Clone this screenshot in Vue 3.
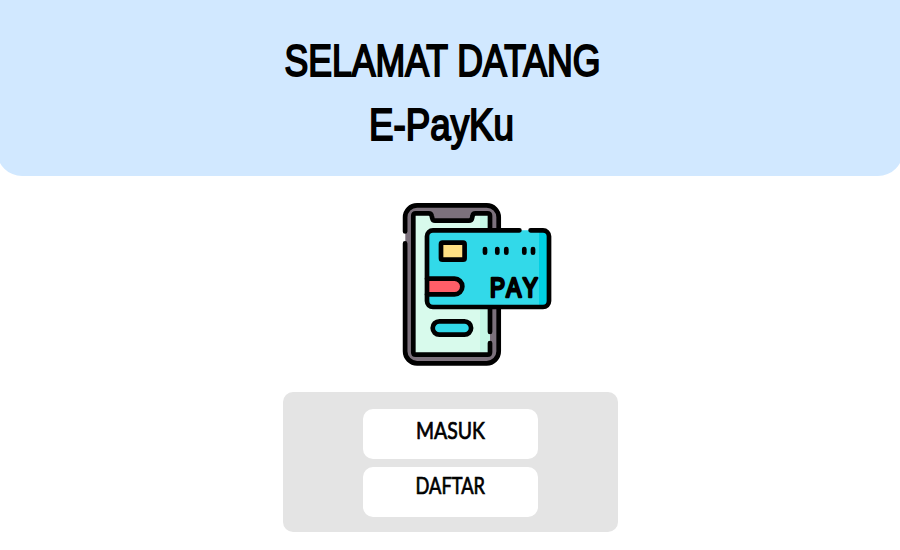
<script setup>
const actions = [
  { label: 'MASUK', left: 53, width: 69, baseline: 30.2 },
  { label: 'DAFTAR', left: 52.5, width: 69.5, baseline: 27.2 },
]
</script>

<template>
  <main class="page">
    <header class="hero">
      <h1 class="title">
        <svg width="900" height="64" viewBox="0 0 900 64">
          <text x="284.5" y="45.9" textLength="316" lengthAdjust="spacingAndGlyphs">SELAMAT DATANG</text>
        </svg>
        <svg width="900" height="64" viewBox="0 0 900 64">
          <text x="369" y="45.9" textLength="145" lengthAdjust="spacingAndGlyphs">E-PayKu</text>
        </svg>
      </h1>
    </header>

    <svg class="art" width="165" height="180" viewBox="395 195 165 180">
      <!-- phone -->
      <rect x="405.3" y="205.3" width="93.4" height="158" rx="12" fill="#7c717c" />
      <path d="M413.3 213.3H431L433.5 220.7H470.5L473 213.3H490V354.7H413.3Z" fill="#d8faec" />
      <path d="M480 213.3H490V354.7H480Z" fill="#c5f7e6" />
      <g class="line">
        <path d="M405.1 231.4V217.3A12 12 0 0 1 417.1 205.3H486.7A12 12 0 0 1 498.7 217.3V351.3A12 12 0 0 1 486.7 363.3H417.1A12 12 0 0 1 405.1 351.3V243.4" />
        <path d="M490 332V215.8Q490 213.3 487.5 213.3H475.5Q473 213.3 472.6 215.8L472 218.4Q471.5 220.7 469 220.7H435Q432.7 220.7 432.3 218.4L431.7 215.8Q431.2 213.3 428.7 213.3H415.8Q413.3 213.3 413.3 215.8V352.2Q413.3 354.7 415.8 354.7H487.5Q490 354.7 490 352.2V343" />
        <rect x="432.7" y="321.3" width="38.4" height="13.4" rx="6.7" fill="#32d9e9" />
      </g>
      <!-- card -->
      <rect x="427" y="230.3" width="122" height="76.7" rx="6" fill="#32d9e9" />
      <path d="M539 230.3H543A6 6 0 0 1 549 236.3V301A6 6 0 0 1 543 307H539Z" fill="#00cfe3" />
      <path d="M427 278.7H454.5A7.85 7.85 0 0 1 454.5 294.4H427Z" fill="#ff5e68" />
      <g class="line">
        <path d="M427 278.7H454.5A7.85 7.85 0 0 1 454.5 294.4H427" />
        <path d="M519.4 230.3H433A6 6 0 0 0 427 236.3V301A6 6 0 0 0 433 307H543A6 6 0 0 0 549 301V236.3A6 6 0 0 0 543 230.3H530.6" />
        <rect x="441" y="242.7" width="23.6" height="17" rx="1.5" fill="#ffe083" />
        <path d="M485 249V252.7M497.3 249V252.7M506.3 249V252.7M524.3 249V252.7M533 249V252.7" />
      </g>
      <text class="pay" x="490" y="296.6" textLength="49" lengthAdjust="spacingAndGlyphs">PAY</text>
    </svg>

    <nav class="panel">
      <button v-for="item in actions" :key="item.label" class="action" type="button">
        <svg width="175" height="50" viewBox="0 0 175 50">
          <text :x="item.left" :y="item.baseline" :textLength="item.width" lengthAdjust="spacingAndGlyphs">{{ item.label }}</text>
        </svg>
      </button>
    </nav>
  </main>
</template>

<style>
body {
  margin: 0;
  background: #fff;
}
</style>

<style scoped>
.page {
  width: 900px;
  height: 550px;
  display: flex;
  flex-direction: column;
  align-items: center;
  overflow: hidden;
}
.hero {
  box-sizing: border-box;
  flex: none;
  width: 906px;
  height: 176px;
  padding-top: 30px;
  background: #d1e8ff;
  border-radius: 0 0 25px 25px;
}
.title {
  margin: 0;
  display: flex;
  flex-direction: column;
  align-items: center;
  font: 400 44.5px "Liberation Sans", Arial, sans-serif;
  stroke: #000;
  stroke-width: 2;
}
.art {
  margin: 19px 0 17px 55px;
  flex: none;
}
.line {
  fill: none;
  stroke: #000;
  stroke-width: 4.7;
  stroke-linecap: round;
  stroke-linejoin: round;
}
.pay {
  font: 400 27px "Liberation Sans", Arial, sans-serif;
  font-kerning: none;
  letter-spacing: 1.6px;
  stroke: #000;
  stroke-width: 2.7;
  stroke-linejoin: round;
}
.panel {
  box-sizing: border-box;
  width: 335px;
  height: 140px;
  padding-top: 17px;
  display: flex;
  flex-direction: column;
  align-items: center;
  gap: 8px;
  background: #e4e4e4;
  border-radius: 10px;
}
.action {
  width: 175px;
  height: 50px;
  padding: 0;
  border: 0;
  border-radius: 10px;
  background: #fff;
  color: #000;
  font: 400 22.5px Lato, "Open Sans", sans-serif;
  stroke: #000;
  stroke-width: 0.7;
}
.action svg {
  display: block;
}
</style>
